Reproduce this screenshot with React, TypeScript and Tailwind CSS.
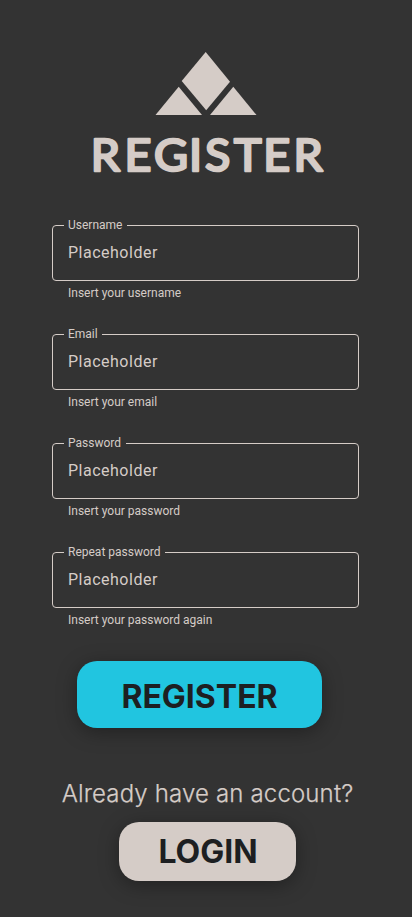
const fields = [
  { id: "username", label: "Username", hint: "Insert your username", type: "text" },
  { id: "email", label: "Email", hint: "Insert your email", type: "email" },
  { id: "password", label: "Password", hint: "Insert your password", type: "password" },
  { id: "repeat", label: "Repeat password", hint: "Insert your password again", type: "password" },
];

function Logo() {
  return (
    <svg width="102" height="64" viewBox="155 52 102 64" fill="#d5ccc7" aria-hidden="true">
      <path d="M205.7 52 230 81.7 206.2 110.3 181.7 81z" />
      <path d="M178.7 86.7 202 115H155.5z" />
      <path d="M233.3 86.7 256.5 115H210z" />
    </svg>
  );
}

// Wordmark with softly rounded letter ends.
function Wordmark() {
  return (
    <h1 className="mt-[9px] h-[60px] w-[252px]">
      <svg
        width="252"
        height="60"
        viewBox="80 125 252 60"
        className="font-['Lato',sans-serif] text-[44px] font-normal"
        fill="#d5ccc7"
        stroke="#d5ccc7"
        strokeWidth="2.5"
        strokeLinejoin="round"
      >
        <text transform="translate(90.8 0) scale(1.06 1)" x="0 31.7 59.6 92.6 107.8 135.2 162.6 191.2" y="170.7">
          REGISTER
        </text>
      </svg>
    </h1>
  );
}

function Field({ id, label, hint, type }: (typeof fields)[number]) {
  return (
    <div className="flex flex-col gap-1 font-['Roboto',sans-serif]">
      <div className="relative h-14 rounded border border-[#d5ccc7]">
        <label htmlFor={id} className="absolute -top-[9px] left-[11px] bg-[#333333] pl-1 pr-[4.5px] text-xs leading-4">
          {label}
        </label>
        <input
          id={id}
          type={type}
          placeholder="Placeholder"
          className="block h-full w-full bg-transparent px-[15px] pb-[2px] text-base tracking-[0.5px] outline-none placeholder:text-[#d5ccc7]"
        />
      </div>
      <p className="px-4 text-xs leading-4">{hint}</p>
    </div>
  );
}

export default function App() {
  return (
    <main className="flex h-[917px] w-full flex-col items-center overflow-hidden bg-[#333333] pt-[52px] font-['Inter',sans-serif] text-[#d5ccc7]">
      <Logo />
      <Wordmark />
      <form className="mt-10 flex w-full flex-col items-center">
        <div className="mr-px flex w-[307px] flex-col gap-[33px]">
          {fields.map((f) => (
            <Field key={f.id} {...f} />
          ))}
        </div>
        <button
          type="button"
          className="mt-[33px] mr-[13px] h-[67px] w-[245px] rounded-[20px] bg-[#21c5e0] pt-[4px] text-[32px] font-bold leading-none text-[#1d1f22] shadow-[0_4px_20px_rgba(0,0,0,0.35)]"
        >
          REGISTER
        </button>
      </form>
      <p className="mt-[50px] whitespace-nowrap pl-[3px] text-2xl font-light leading-8 tracking-[0.15px] [-webkit-text-stroke:0.25px_#d5ccc7]">
        Already have an account?
      </p>
      <button
        type="button"
        className="mt-[12px] ml-[3px] h-[59px] w-[177px] shrink-0 rounded-[20px] bg-[#d5ccc7] pl-[1px] text-[32px] font-bold leading-none text-[#1d1f22] shadow-[0_4px_20px_rgba(0,0,0,0.35)]"
      >
        LOGIN
      </button>
    </main>
  );
}
